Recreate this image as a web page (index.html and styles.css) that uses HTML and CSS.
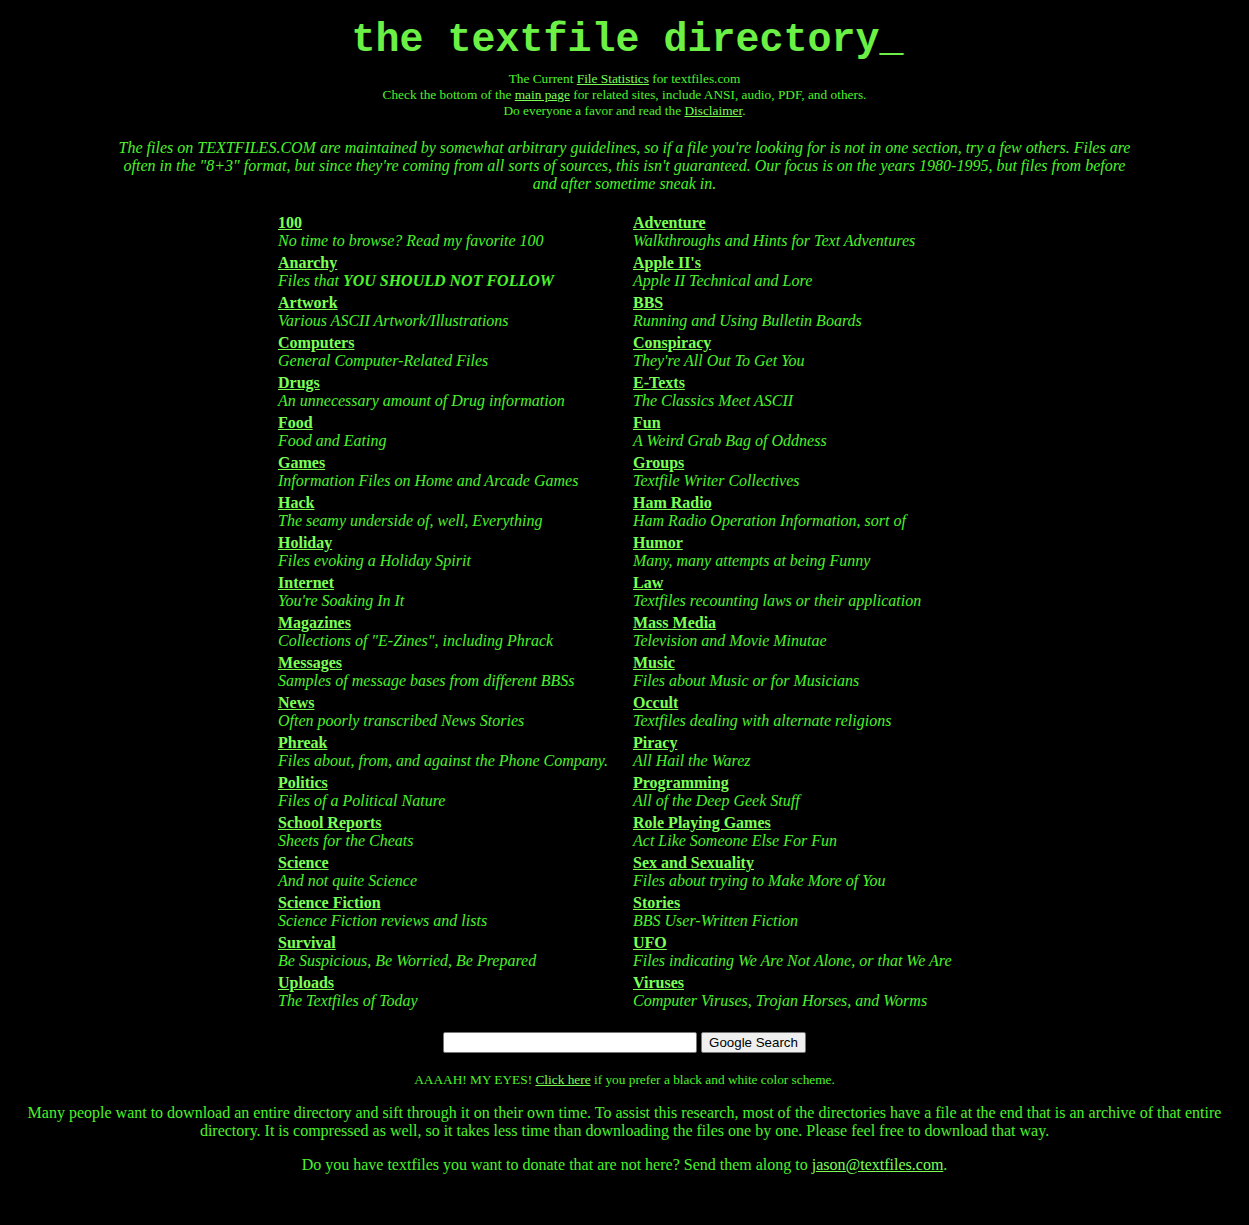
FILE: index.html
```html
<!DOCTYPE html>
<html>
<head>
<meta charset="utf-8">
<title>the textfile directory</title>
<link rel="stylesheet" href="styles.css">
</head>
<body>
<div class="title">the textfile directory_</div>
<div class="intro">
  <div>The Current <a href="#">File Statistics</a> for textfiles.com</div>
  <div>Check the bottom of the <a href="#">main page</a> for related sites, include ANSI, audio, PDF, and others.</div>
  <div>Do everyone a favor and read the <a href="#">Disclaimer</a>.</div>
</div>
<p class="about">The files on TEXTFILES.COM are maintained by somewhat arbitrary guidelines, so if a file you're looking for is not in one section, try a few others. Files are often in the "8+3" format, but since they're coming from all sorts of sources, this isn't guaranteed. Our focus is on the years 1980-1995, but files from before and after sometime sneak in.</p>
<div class="dirs">
  <div class="item"><a href="#">100</a><i>No time to browse? Read my favorite 100</i></div>
  <div class="item"><a href="#">Adventure</a><i>Walkthroughs and Hints for Text Adventures</i></div>
  <div class="item"><a href="#">Anarchy</a><i>Files that <b>YOU SHOULD NOT FOLLOW</b></i></div>
  <div class="item"><a href="#">Apple II's</a><i>Apple II Technical and Lore</i></div>
  <div class="item"><a href="#">Artwork</a><i>Various ASCII Artwork/Illustrations</i></div>
  <div class="item"><a href="#">BBS</a><i>Running and Using Bulletin Boards</i></div>
  <div class="item"><a href="#">Computers</a><i>General Computer-Related Files</i></div>
  <div class="item"><a href="#">Conspiracy</a><i>They're All Out To Get You</i></div>
  <div class="item"><a href="#">Drugs</a><i>An unnecessary amount of Drug information</i></div>
  <div class="item"><a href="#">E-Texts</a><i>The Classics Meet ASCII</i></div>
  <div class="item"><a href="#">Food</a><i>Food and Eating</i></div>
  <div class="item"><a href="#">Fun</a><i>A Weird Grab Bag of Oddness</i></div>
  <div class="item"><a href="#">Games</a><i>Information Files on Home and Arcade Games</i></div>
  <div class="item"><a href="#">Groups</a><i>Textfile Writer Collectives</i></div>
  <div class="item"><a href="#">Hack</a><i>The seamy underside of, well, Everything</i></div>
  <div class="item"><a href="#">Ham Radio</a><i>Ham Radio Operation Information, sort of</i></div>
  <div class="item"><a href="#">Holiday</a><i>Files evoking a Holiday Spirit</i></div>
  <div class="item"><a href="#">Humor</a><i>Many, many attempts at being Funny</i></div>
  <div class="item"><a href="#">Internet</a><i>You're Soaking In It</i></div>
  <div class="item"><a href="#">Law</a><i>Textfiles recounting laws or their application</i></div>
  <div class="item"><a href="#">Magazines</a><i>Collections of "E-Zines", including Phrack</i></div>
  <div class="item"><a href="#">Mass Media</a><i>Television and Movie Minutae</i></div>
  <div class="item"><a href="#">Messages</a><i>Samples of message bases from different BBSs</i></div>
  <div class="item"><a href="#">Music</a><i>Files about Music or for Musicians</i></div>
  <div class="item"><a href="#">News</a><i>Often poorly transcribed News Stories</i></div>
  <div class="item"><a href="#">Occult</a><i>Textfiles dealing with alternate religions</i></div>
  <div class="item"><a href="#">Phreak</a><i>Files about, from, and against the Phone Company.</i></div>
  <div class="item"><a href="#">Piracy</a><i>All Hail the Warez</i></div>
  <div class="item"><a href="#">Politics</a><i>Files of a Political Nature</i></div>
  <div class="item"><a href="#">Programming</a><i>All of the Deep Geek Stuff</i></div>
  <div class="item"><a href="#">School Reports</a><i>Sheets for the Cheats</i></div>
  <div class="item"><a href="#">Role Playing Games</a><i>Act Like Someone Else For Fun</i></div>
  <div class="item"><a href="#">Science</a><i>And not quite Science</i></div>
  <div class="item"><a href="#">Sex and Sexuality</a><i>Files about trying to Make More of You</i></div>
  <div class="item"><a href="#">Science Fiction</a><i>Science Fiction reviews and lists</i></div>
  <div class="item"><a href="#">Stories</a><i>BBS User-Written Fiction</i></div>
  <div class="item"><a href="#">Survival</a><i>Be Suspicious, Be Worried, Be Prepared</i></div>
  <div class="item"><a href="#">UFO</a><i>Files indicating We Are Not Alone, or that We Are</i></div>
  <div class="item"><a href="#">Uploads</a><i>The Textfiles of Today</i></div>
  <div class="item"><a href="#">Viruses</a><i>Computer Viruses, Trojan Horses, and Worms</i></div>
</div>
<form class="search">
  <input class="q" type="text">
  <button class="go" type="button">Google Search</button>
</form>
<div class="eyes">AAAAH! MY EYES! <a href="#">Click here</a> if you prefer a black and white color scheme.</div>
<p class="note">Many people want to download an entire directory and sift through it on their own time. To assist this research, most of the directories have a file at the end that is an archive of that entire directory. It is compressed as well, so it takes less time than downloading the files one by one. Please feel free to download that way.</p>
<p class="note">Do you have textfiles you want to donate that are not here? Send them along to <a href="#">jason@textfiles.com</a>.</p>
</body>
</html>
```
FILE: styles.css
```css
html, body {
  background: #000;
}
body {
  margin: 8px;
  color: #4cf22c;
  font-family: "Liberation Serif", "Times New Roman", serif;
  font-size: 16px;
}
a {
  color: #7cff55;
  text-decoration: underline;
}
.title {
  font-family: "Liberation Mono", "Courier New", monospace;
  font-weight: bold;
  font-size: 40px;
  line-height: 46px;
  color: #6cf046;
  text-align: center;
  margin-top: 10px;
  padding-left: 6px;
}
.intro {
  font-size: 13.33px;
  line-height: 16px;
  text-align: center;
  margin-top: 7px;
}
.about {
  font-style: italic;
  text-align: center;
  line-height: 18px;
  max-width: 1020px;
  margin: 20px auto 0;
}
.dirs {
  display: grid;
  grid-template-columns: 355px 338px;
  justify-content: center;
  row-gap: 4px;
  margin-top: 21px;
  line-height: 18px;
}
.item a {
  display: block;
  font-weight: bold;
  width: max-content;
}
.item i {
  display: block;
}
.search {
  display: flex;
  justify-content: center;
  align-items: center;
  gap: 4px;
  margin: 22px 0 0;
}
.q {
  width: 254px;
  height: 21px;
  box-sizing: border-box;
  border: 1px solid #767676;
  border-radius: 2px;
  background: #fff;
  padding: 1px 2px;
  margin: 0;
}
.go {
  font-family: "Liberation Sans", Arial, sans-serif;
  font-size: 13.33px;
  height: 21px;
  padding: 1px 7px;
  background: #efefef;
  border: 1px solid #767676;
  border-radius: 2px;
  color: #000;
  margin: 0;
}
.eyes {
  font-size: 13.33px;
  line-height: 16px;
  text-align: center;
  margin-top: 19px;
}
.note {
  text-align: center;
  line-height: 18px;
  margin: 16px 0 0;
}
```
